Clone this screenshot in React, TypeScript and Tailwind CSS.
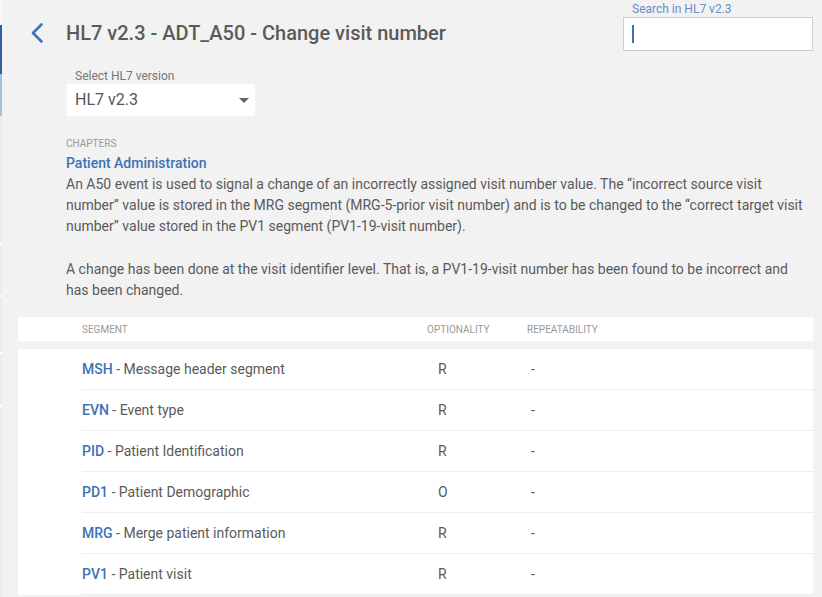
const segments = [
  { code: "MSH", name: "Message header segment", opt: "R" },
  { code: "EVN", name: "Event type", opt: "R" },
  { code: "PID", name: "Patient Identification", opt: "R" },
  { code: "PD1", name: "Patient Demographic", opt: "O" },
  { code: "MRG", name: "Merge patient information", opt: "R" },
  { code: "PV1", name: "Patient visit", opt: "R" },
];

export default function App() {
  return (
    <div className="flex h-[597px] w-[822px] overflow-hidden bg-[#f2f2f2] font-['Roboto',sans-serif] text-[#555]">
      {/* cut-off sidebar edge */}
      <div className="flex w-[2px] shrink-0 flex-col">
        <div className="h-[25px] bg-[#f8f8f8]" />
        <div className="h-[49px] bg-[#2f5f9f]" />
        <div className="h-[42px] bg-[#a6c0e0]" />
        <div className="h-[127px] bg-[#ececec]" />
        <div className="h-[2px] bg-white" />
        <div className="h-[50px] bg-[#ececec]" />
        <div className="h-[2px] bg-white" />
        <div className="h-[55px] bg-[#ececec]" />
        <div className="h-[2px] bg-white" />
        <div className="h-[51px] bg-[#ececec]" />
        <div className="h-[2px] bg-white" />
        <div className="flex-1 bg-[#ececec]" />
      </div>

      <main className="flex-1 pl-[16px] pr-[9px]">
        {/* Header */}
        <header className="flex items-start justify-between">
          <div className="flex items-center pt-[20px]">
            <svg width="24" height="26" viewBox="0 0 24 26" className="ml-[11px]">
              <path d="M 12.5 4.5 L 4 13 L 12.5 21.5" fill="none" stroke="#3d72b4" strokeWidth="2.6" strokeLinecap="round" strokeLinejoin="round" />
            </svg>
            <h1 className="ml-[13px] text-[20px] font-medium leading-[26px] text-[#5b5b5b]">
              HL7 v2.3 - ADT_A50 - Change visit number
            </h1>
          </div>
          <div className="w-[190px] pt-[2px]">
            <div className="pl-[9px] text-[12px] leading-[15px] text-[#6a8fc6]">Search in HL7 v2.3</div>
            <div className="flex h-[34px] items-center border border-[#cfcfcf] bg-white pl-[8px]">
              <div className="h-[18px] w-[1.5px] bg-[#3d6fb0]" />
            </div>
          </div>
        </header>

        {/* Version select */}
        <div className="ml-[49px] mt-[18px] w-[188px]">
          <div className="pl-[8px] text-[12px] leading-[14px] text-[#777]">Select HL7 version</div>
          <div className="mt-[1px] flex h-[32px] items-center justify-between bg-white pl-[8px] pr-[6px]">
            <span className="text-[16px] text-[#555]">HL7 v2.3</span>
            <svg width="10" height="5" viewBox="0 0 10 5">
              <path d="M0 0 L10 0 L5 5 Z" fill="#666" />
            </svg>
          </div>
        </div>

        {/* Chapter */}
        <section className="ml-[48px] mt-[22px] w-[745px]">
          <div className="text-[10px] leading-[12px] text-[#999]">CHAPTERS</div>
          <div className="mt-[3px] text-[14px] font-medium leading-[20px] text-[#3d72b4]">Patient Administration</div>
          <p className="mt-[1px] text-[14px] leading-[21px] text-[#5a5a5a]">
            An A50 event is used to signal a change of an incorrectly assigned visit number value. The “incorrect source visit
            number” value is stored in the MRG segment (MRG-5-prior visit number) and is to be changed to the “correct target visit
            number” value stored in the PV1 segment (PV1-19-visit number).
          </p>
          <p className="mt-[22px] text-[14px] leading-[21px] text-[#5a5a5a]">
            A change has been done at the visit identifier level. That is, a PV1-19-visit number has been found to be incorrect and
            has been changed.
          </p>
        </section>

        {/* Segment table */}
        <div className="mt-[16px] flex h-[24px] items-center bg-white pl-[64px] text-[10px] text-[#999]">
          <div className="w-[345px]">SEGMENT</div>
          <div className="w-[100px]">OPTIONALITY</div>
          <div>REPEATABILITY</div>
        </div>
        <div className="mt-[8px] bg-white pl-[64px]">
          {segments.map((s) => (
            <div key={s.code} className="flex h-[41px] items-center border-b border-[#eeeeee] text-[14px]">
              <div className="w-[345px] text-[#5a5a5a]">
                <span className="font-medium text-[#3d72b4]">{s.code}</span> - {s.name}
              </div>
              <div className="w-[100px] pl-[11px] text-[#5a5a5a]">{s.opt}</div>
              <div className="pl-[4px] text-[#5a5a5a]">-</div>
            </div>
          ))}
        </div>
      </main>
    </div>
  );
}
